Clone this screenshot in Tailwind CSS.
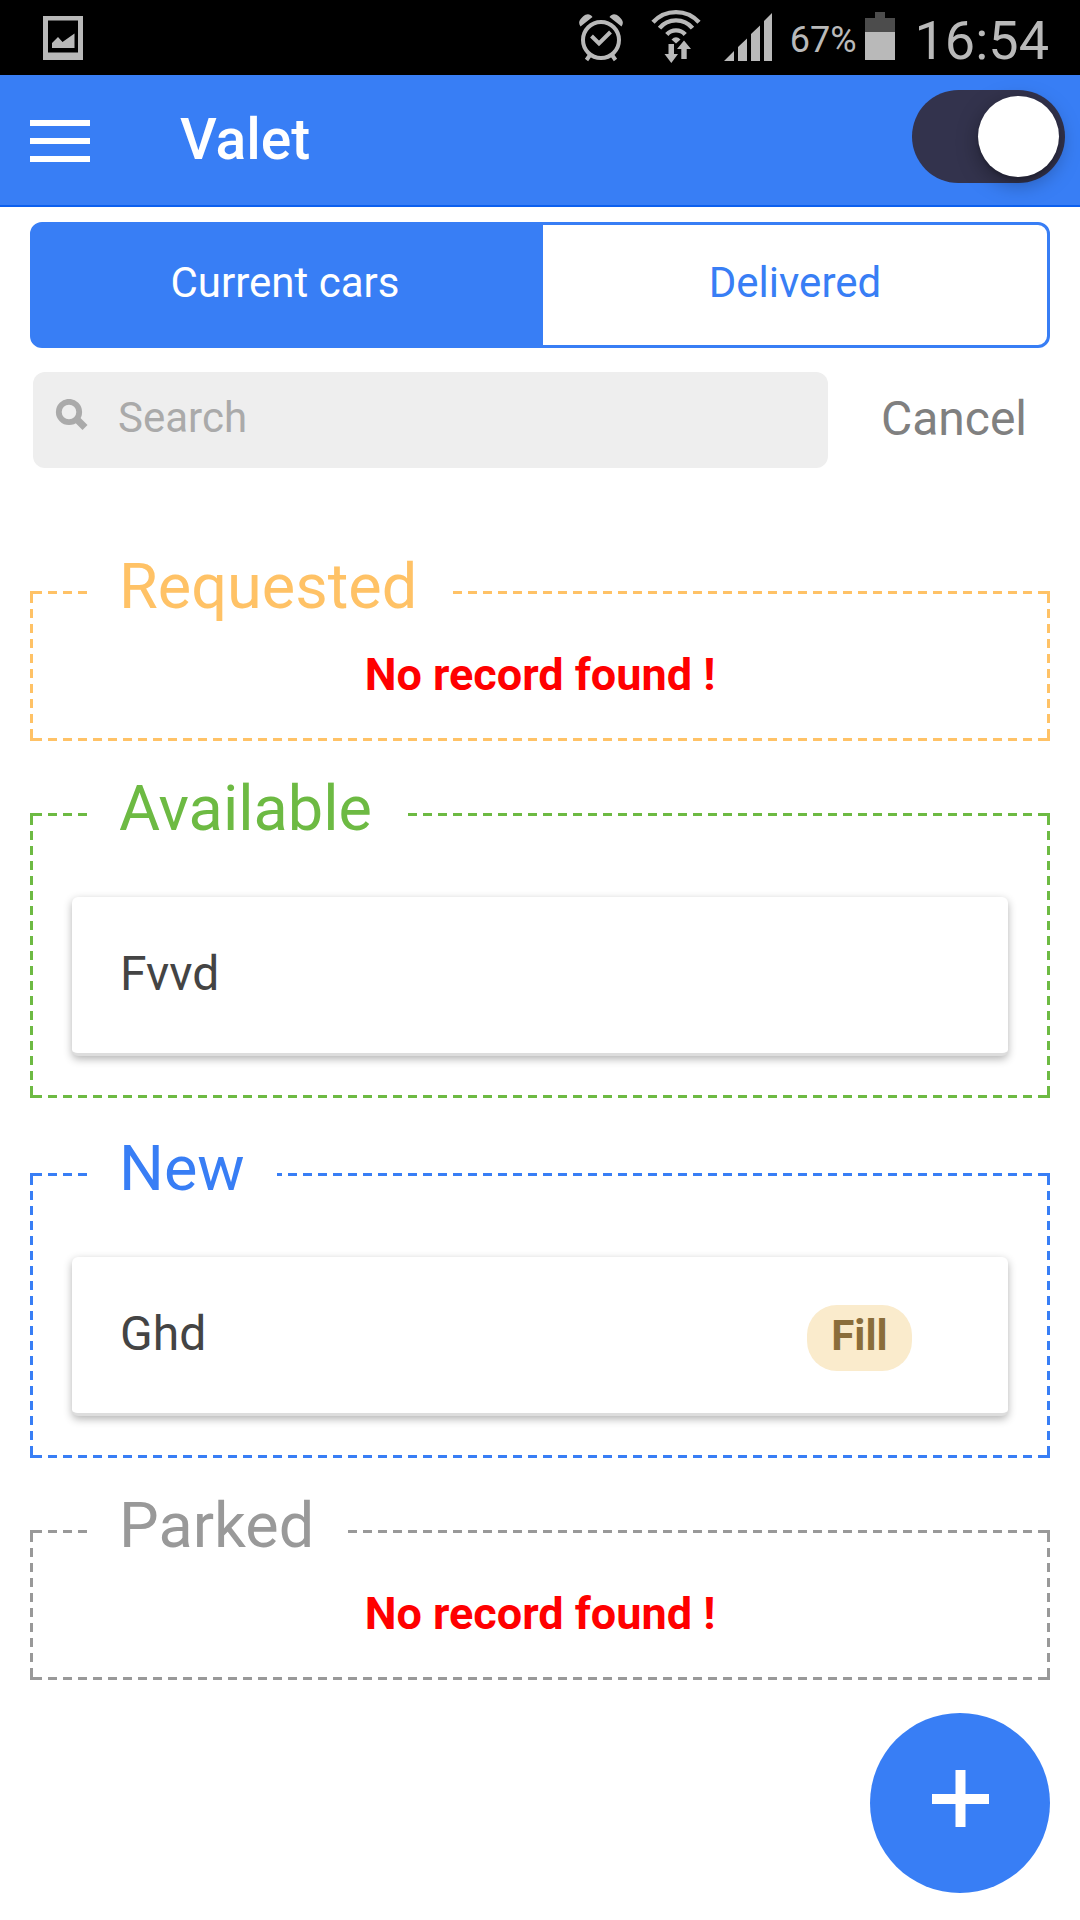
<!DOCTYPE html>
<html lang="en">
<head>
<meta charset="utf-8">
<meta name="viewport" content="width=device-width, initial-scale=1">
<title>Valet</title>
<script src="https://cdn.jsdelivr.net/npm/@tailwindcss/browser@4"></script>
</head>
<body class="min-h-screen bg-white font-['Roboto',sans-serif] text-[#444]">

<!-- Status bar -->
<div class="flex h-[75px] items-center justify-between bg-black pr-[31px] pl-[43px] text-[#b9b9b9]">
  <svg class="h-11 w-10" viewBox="0 0 40 44" fill="currentColor" aria-hidden="true">
    <path fill-rule="evenodd" d="M0 0H40V44H0ZM5 4.500V36.500H35V4.500Z"/>
    <path d="M9 32V27L15 21L19.500 26L31.500 17.500V32Z"/>
  </svg>
  <div class="flex items-center">
    <svg class="mr-[22px] h-[75px] w-[50px]" viewBox="579 0 50 75" fill="none" stroke="currentColor" stroke-width="4" aria-hidden="true">
      <circle cx="601" cy="40" r="18"/>
      <path d="M591.500 36L599 43.500L610.500 32M590 55L586.500 60M612 55L615.500 60"/>
      <path stroke="none" fill="currentColor" d="M580.500 26.500C578 23 579 20 583 16.500C586.500 13.500 590 13.500 592.500 17ZM621.500 26.500C624 23 623 20 619 16.500C615.500 13.500 612 13.500 609.500 17Z"/>
    </svg>
    <svg class="mr-[22px] h-[75px] w-[51px]" viewBox="651 0 51 75" fill="none" stroke="currentColor" stroke-width="4.400" aria-hidden="true">
      <path d="M653 22.300A31 31 0 0 1 699 22.300M659.500 28.100A21.500 21.500 0 0 1 692.500 28.100M666.800 34.400A12.500 12.500 0 0 1 685.200 34.400"/>
      <path stroke="none" fill="currentColor" d="M671.500 39.500Q676 35 680.500 39.500L676 43.500ZM668.500 44H674V54H678L671.300 63L664.500 54H668.500ZM684 40.500L691 49H686.700V59H681.300V49H677Z"/>
    </svg>
    <svg class="mr-[18px] h-[75px] w-12" viewBox="724 0 48 75" fill="currentColor" aria-hidden="true">
      <path d="M724 61L734 51V61ZM738 61V47L747 38.500V61ZM751 61V34L760 25.500V61ZM764 61V21L772 13V61Z"/>
    </svg>
    <span class="pt-1 text-4xl">67%</span>
    <svg class="mr-5 ml-2 h-[75px] w-[30px]" viewBox="865 0 30 75" aria-hidden="true">
      <path fill="#4c4c4c" d="M875 12H885V18H895V32H865V18H875Z"/>
      <path fill="currentColor" d="M865 32H895V60H865Z"/>
    </svg>
    <span class="pt-1.5 text-[54px] leading-[69px]">16:54</span>
  </div>
</div>

<!-- App header -->
<header class="flex h-[132px] items-center border-b-2 border-[#0c60ee] bg-[#387ef5] pr-[15px] pl-[30px] text-white">
  <button type="button" aria-label="Menu" class="mt-0.5 flex flex-col gap-3">
    <span class="h-1.5 w-15 bg-white"></span>
    <span class="h-1.5 w-15 bg-white"></span>
    <span class="h-1.5 w-15 bg-white"></span>
  </button>
  <h1 class="ml-[90px] flex-1 text-[57px] leading-[72px] font-medium">Valet</h1>
  <label class="mb-2 flex h-[93px] w-[153px] items-center justify-end rounded-full bg-[#33334d] px-1.5">
    <input type="checkbox" checked aria-label="On duty" class="sr-only">
    <span class="size-[81px] rounded-full bg-white shadow-[0_6px_21px_rgba(0,0,0,0.35),0_3px_3px_rgba(0,0,0,0.15)]"></span>
  </label>
</header>

<main>
  <!-- Tabs -->
  <div class="mx-[30px] mt-[15px] flex h-[126px] text-[42px] leading-[48px]">
    <button type="button" class="flex-1 rounded-l-xl border-3 border-[#387ef5] bg-[#387ef5] pb-1 text-white">Current cars</button>
    <button type="button" class="flex-1 rounded-r-xl border-3 border-[#387ef5] pb-1 text-[#387ef5]">Delivered</button>
  </div>

  <!-- Search -->
  <form class="mt-6 flex items-center pr-[53px] pl-[33px]">
    <label class="flex h-24 flex-1 items-center rounded-xl bg-[#eee] pl-[22px]">
      <svg class="mb-1.5 h-9 w-9" viewBox="0 0 36 36" fill="none" stroke="#aaa" aria-hidden="true">
        <circle cx="14" cy="12" r="10.200" stroke-width="5.800" transform="translate(0 1)"/>
        <path stroke-width="7" d="M20 18.500L30 28.500"/>
      </svg>
      <input type="text" placeholder="Search" aria-label="Search" class="ml-[27px] w-full flex-1 bg-transparent pb-1 text-[42px] leading-[48px] outline-none placeholder:text-[#aaa]">
    </label>
    <button type="button" class="ml-[53px] pb-0.5 text-5xl text-[#808080]">Cancel</button>
  </form>

  <!-- Each group's dashed frame is a nine-slice image: 9px dashes, 6px gaps, solid corners -->
  <fieldset class="mt-[87px] mx-[30px] border-3 border-dashed border-[#ffc266] [border-image:url(data:image/svg+xml,%3Csvg%20xmlns=%22http://www.w3.org/2000/svg%22%20width=%2245%22%20height=%2245%22%3E%3Cpath%20fill=%22%23ffc266%22%20d=%22M0,0H12V3H3V12H0ZM33,0H45V12H42V3H33ZM0,33H3V42H12V45H0ZM42,33H45V45H33V42H42ZM18,0H27V3H18ZM18,42H27V45H18ZM0,18H3V27H0ZM42,18H45V27H42Z%22/%3E%3C/svg%3E)_15_/_15px_round]">
    <legend class="ml-[54px] px-8 pb-3 text-[63px] leading-[63px] text-[#ffc266]">Requested</legend>
    <p class="pt-[18px] pb-9 text-center text-[45px] leading-[54px] font-bold text-[#f00]">No record found !</p>
  </fieldset>

  <fieldset class="mt-9 mx-[30px] border-3 border-dashed border-[#6dba43] [border-image:url(data:image/svg+xml,%3Csvg%20xmlns=%22http://www.w3.org/2000/svg%22%20width=%2245%22%20height=%2245%22%3E%3Cpath%20fill=%22%236dba43%22%20d=%22M0,0H12V3H3V12H0ZM33,0H45V12H42V3H33ZM0,33H3V42H12V45H0ZM42,33H45V45H33V42H42ZM18,0H27V3H18ZM18,42H27V45H18ZM0,18H3V27H0ZM42,18H45V27H42Z%22/%3E%3C/svg%3E)_15_/_15px_round]">
    <legend class="ml-[54px] px-8 pb-3 text-[63px] leading-[63px] text-[#6dba43]">Available</legend>
    <div class="mx-[39px] mt-[45px] mb-[39px] flex h-[159px] items-center rounded-md border-b-3 border-[#ddd] bg-white pr-24 pl-12 shadow-[0_3px_9px_rgba(0,0,0,0.3)]">
      <span class="flex-1 pb-0.5 text-5xl">Fvvd</span>
    </div>
  </fieldset>

  <fieldset class="mt-[39px] mx-[30px] border-3 border-dashed border-[#387ef5] [border-image:url(data:image/svg+xml,%3Csvg%20xmlns=%22http://www.w3.org/2000/svg%22%20width=%2245%22%20height=%2245%22%3E%3Cpath%20fill=%22%23387ef5%22%20d=%22M0,0H12V3H3V12H0ZM33,0H45V12H42V3H33ZM0,33H3V42H12V45H0ZM42,33H45V45H33V42H42ZM18,0H27V3H18ZM18,42H27V45H18ZM0,18H3V27H0ZM42,18H45V27H42Z%22/%3E%3C/svg%3E)_15_/_15px_round]">
    <legend class="ml-[54px] px-8 pb-3 text-[63px] leading-[63px] text-[#387ef5]">New</legend>
    <div class="mx-[39px] mt-[45px] mb-[39px] flex h-[159px] items-center rounded-md border-b-3 border-[#ddd] bg-white pr-24 pl-12 shadow-[0_3px_9px_rgba(0,0,0,0.3)]">
      <span class="flex-1 pb-0.5 text-5xl">Ghd</span>
      <button type="button" class="mt-1.5 h-[66px] w-[105px] rounded-[30px] bg-[#faebcc] pb-1 text-[42px] leading-[48px] font-bold text-[#8a6d3b]">Fill</button>
    </div>
  </fieldset>

  <fieldset class="mt-9 mx-[30px] border-3 border-dashed border-[#999] [border-image:url(data:image/svg+xml,%3Csvg%20xmlns=%22http://www.w3.org/2000/svg%22%20width=%2245%22%20height=%2245%22%3E%3Cpath%20fill=%22%23999999%22%20d=%22M0,0H12V3H3V12H0ZM33,0H45V12H42V3H33ZM0,33H3V42H12V45H0ZM42,33H45V45H33V42H42ZM18,0H27V3H18ZM18,42H27V45H18ZM0,18H3V27H0ZM42,18H45V27H42Z%22/%3E%3C/svg%3E)_15_/_15px_round]">
    <legend class="ml-[54px] px-8 pb-3 text-[63px] leading-[63px] text-[#999]">Parked</legend>
    <p class="pt-[18px] pb-9 text-center text-[45px] leading-[54px] font-bold text-[#f00]">No record found !</p>
  </fieldset>
</main>

<!-- Floating add button -->
<button type="button" aria-label="Add car" class="fixed right-[30px] bottom-[27px] flex size-[180px] items-center justify-center rounded-full bg-[#387ef5] pb-2.5">
  <svg class="size-[57px]" viewBox="0 0 57 57" aria-hidden="true"><path fill="#fff" d="M23.500 0H33.500V24H57V34H33.500V57H23.500V34H0V24H23.500Z"/></svg>
</button>
</body>
</html>
